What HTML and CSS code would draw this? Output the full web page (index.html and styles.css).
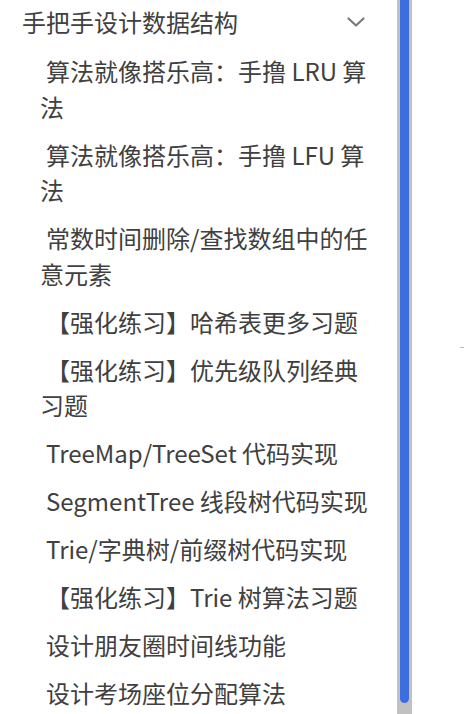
FILE: index.html
```html
<!DOCTYPE html>
<html lang="zh-CN">
<head>
<meta charset="utf-8">
<link rel="stylesheet" href="styles.css">
</head>
<body>
<div class="page">
  <nav class="sidebar">
    <div class="group-title">
      <span class="group-label">手把手设计数据结构</span>
      <svg class="chevron" width="18" height="10" viewBox="0 0 18 10"><path d="M1.5 1.5 L9 8.5 L16.5 1.5" fill="none" stroke="#7a7a7a" stroke-width="2.2" stroke-linecap="round" stroke-linejoin="round"/></svg>
    </div>
    <ul class="items">
      <li class="item">算法就像搭乐高：手撸 LRU 算法</li>
      <li class="item">算法就像搭乐高：手撸 LFU 算法</li>
      <li class="item">常数时间删除/查找数组中的任意元素</li>
      <li class="item">【强化练习】哈希表更多习题</li>
      <li class="item">【强化练习】优先级队列经典习题</li>
      <li class="item">TreeMap/TreeSet 代码实现</li>
      <li class="item">SegmentTree 线段树代码实现</li>
      <li class="item">Trie/字典树/前缀树代码实现</li>
      <li class="item">【强化练习】Trie 树算法习题</li>
      <li class="item">设计朋友圈时间线功能</li>
      <li class="item">设计考场座位分配算法</li>
    </ul>
  </nav>
  <div class="scroll-track"><div class="scroll-thumb"></div></div>
  <div class="rest"><div class="tick"></div></div>
</div>
</body>
</html>
```
FILE: styles.css
```css
html, body {
  margin: 0;
  padding: 0;
  background: #ffffff;
}
.page {
  display: flex;
  height: 714px;
  overflow: hidden;
}
.sidebar {
  width: 397px;
  flex: none;
  font-family: "Noto Sans CJK SC", "Noto Sans", sans-serif;
  font-size: 24px;
  color: #404040;
}
.group-title {
  display: flex;
  align-items: center;
  justify-content: space-between;
  padding: 4px 32px 8px 22px;
  line-height: 35px;
}
.chevron {
  display: block;
}
.items {
  list-style: none;
  margin: 0;
  padding: 0 22px 0 40px;
}
.item {
  padding: 6px 0 6.5px;
  line-height: 35.5px;
  text-indent: 6px;
}
.scroll-track {
  width: 15px;
  flex: none;
  background: #c1c1c1;
  padding: 0 3px;
  box-sizing: border-box;
}
.scroll-thumb {
  height: 703px;
  background: #3c6ee0;
  border-radius: 0 0 5px 5px;
}
.rest {
  flex: 1;
  display: flex;
  flex-direction: column;
  align-items: flex-end;
  padding-top: 347px;
}
.tick {
  width: 4px;
  height: 1px;
  background: #b8b8b8;
}
```
